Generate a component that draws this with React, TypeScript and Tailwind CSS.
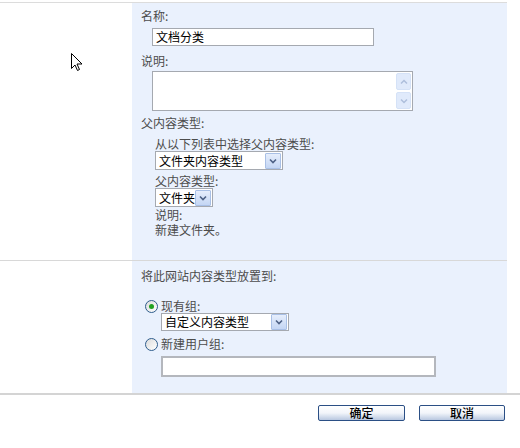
import React from 'react';

const font = { fontFamily: '"Noto Sans CJK SC", "Noto Sans", sans-serif' };

function DropArrow() {
  return (
    <span className="flex h-[16px] w-[16px] shrink-0 items-center justify-center rounded-[1px] border border-[#a9c0e6] bg-gradient-to-b from-[#e6eefc] to-[#c4d6f4]">
      <svg width="8" height="6" viewBox="0 0 8 6">
        <path d="M1 1.5 L4 4.5 L7 1.5" fill="none" stroke="#4d6185" strokeWidth="1.6" />
      </svg>
    </span>
  );
}

function FakeSelect({ value, width, height = 19 }: { value: string; width: string; height?: number }) {
  return (
    <div
      className={`flex items-center justify-between whitespace-nowrap border border-[#a5a9b0] bg-white pl-[3px] pr-[1px] text-[12px] leading-[14px] text-black ${width}`}
      style={{ height }}
    >
      <span>{value}</span>
      <DropArrow />
    </div>
  );
}

function Radio({ checked }: { checked?: boolean }) {
  return (
    <span className="flex h-[13px] w-[13px] items-center justify-center rounded-full border border-[#2f5d8c] bg-gradient-to-br from-[#dcdcdc] to-white">
      {checked && <span className="h-[5px] w-[5px] rounded-full bg-[#21a121]" />}
    </span>
  );
}

function ScrollBtn({ up }: { up?: boolean }) {
  return (
    <span className="flex h-[17px] w-[15px] items-center justify-center rounded-[2px] border border-[#d5e2f7] bg-[#e0eafb]">
      <svg width="8" height="6" viewBox="0 0 8 6">
        <path d={up ? 'M1 4.5 L4 1.5 L7 4.5' : 'M1 1.5 L4 4.5 L7 1.5'} fill="none" stroke="#aebfdc" strokeWidth="1.5" />
      </svg>
    </span>
  );
}

export default function App() {
  return (
    <div className="relative h-[448px] w-[520px] overflow-hidden bg-white text-[12px] leading-[14px] text-[#4c4c4c]" style={font}>
      <div className="h-[2px]" />
      <div className="h-px w-[507px] bg-[#dcdcdc]" />

      <div className="flex h-[257px] w-[507px]">
        <div className="w-[132px]" />
        <div className="flex-1 bg-[#eaf1fd] pl-[9px] pt-[6px]">
          <div>名称:</div>
          <div className="ml-[11px] mt-[5px] flex h-[18px] w-[222px] items-center border border-[#a5a9b0] bg-white pl-[3px] text-[12px] text-black">
            文档分类
          </div>
          <div className="mt-[8px]">说明:</div>
          <div className="ml-[11px] mt-[3px] flex h-[40px] w-[261px] justify-end border border-[#a5a9b0] bg-white">
            <div className="flex flex-col justify-between pb-[1px] pr-[1px] pt-[1px]">
              <ScrollBtn up />
              <ScrollBtn />
            </div>
          </div>
          <div className="mt-[5px]">父内容类型:</div>
          <div className="ml-[14px]">
            <div className="mt-[7px]">从以下列表中选择父内容类型:</div>
            <FakeSelect value="文件夹内容类型" width="w-[128px]" />
            <div className="mt-[4px]">父内容类型:</div>
            <FakeSelect value="文件夹" width="w-[58px]" />
            <div className="mt-[1px] leading-[13px]">说明:</div>
            <div className="mt-[2px] leading-[13px]">新建文件夹。</div>
          </div>
        </div>
      </div>

      <div className="h-px w-[507px] bg-[#d8d8d8]" />

      <div className="flex h-[132px] w-[507px]">
        <div className="w-[132px]" />
        <div className="flex-1 bg-[#eaf1fd] pl-[9px] pt-[8px]">
          <div>将此网站内容类型放置到:</div>
          <div className="ml-[4px] mt-[16px] flex h-[14px] items-center gap-[3px]">
            <Radio checked />
            <span>现有组:</span>
          </div>
          <div className="ml-[20px]">
            <FakeSelect value="自定义内容类型" width="w-[128px]" height={18} />
          </div>
          <div className="ml-[4px] mt-[6px] flex h-[14px] items-center gap-[3px]">
            <Radio />
            <span>新建用户组:</span>
          </div>
          <div className="ml-[20px] mt-[5px] h-[21px] w-[275px] border-2 border-[#b4b7bd] bg-white" />
        </div>
      </div>

      <div className="h-[2px] w-[520px] bg-[#d4d4d4]" />

      <div className="flex gap-[14px] pl-[318px] pt-[10px]">
        <button className="h-[16px] w-[87px] rounded-[2px] border border-[#2b4f85] bg-gradient-to-b from-white via-[#f2f5fa] to-[#b9c8e0] text-[12px] font-medium leading-[14px] text-black">
          确定
        </button>
        <button className="h-[16px] w-[86px] rounded-[2px] border border-[#2b4f85] bg-gradient-to-b from-white via-[#f2f5fa] to-[#b9c8e0] text-[12px] font-medium leading-[14px] text-black">
          取消
        </button>
      </div>

      <svg className="absolute left-[71px] top-[53px]" width="13" height="19" viewBox="0 0 13 19">
        <path d="M0.5 0.5 L0.5 15.5 L4 12 L6.5 17.5 L8.5 16.5 L6 11 L11 11 Z" fill="white" stroke="black" strokeWidth="1" />
      </svg>
    </div>
  );
}
